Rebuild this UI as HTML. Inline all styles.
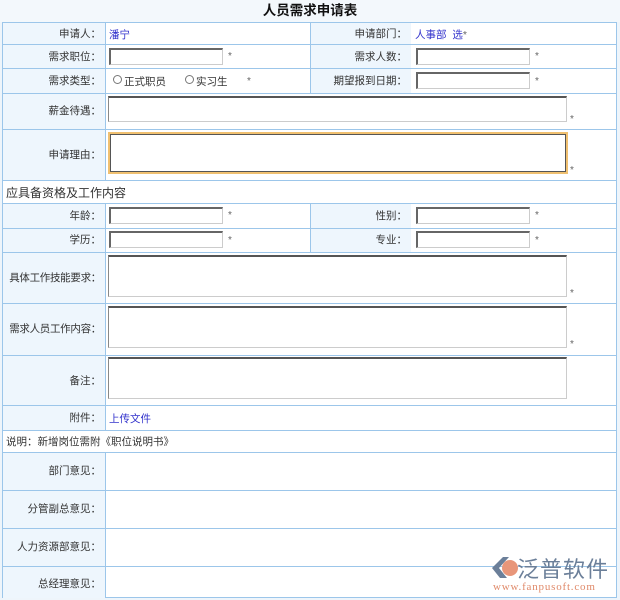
<!DOCTYPE html>
<html><head><meta charset="utf-8"><style>
*{margin:0;padding:0;box-sizing:border-box}
body{width:620px;height:600px;background:#eef5fb;font-family:"Liberation Sans","Noto Sans CJK SC",sans-serif;font-size:10.5px;color:#333;position:relative;overflow:hidden}
.a{position:absolute;white-space:nowrap}
.title{left:0;top:0;width:620px;height:22px;text-align:center;font-size:13.5px;font-weight:bold;color:#111;line-height:22px;background:#f3f8fc}
.tb{left:2px;top:22px;width:615px;height:576px;background:#fff;border:1px solid #9cc6ea}
.h{height:1px;background:#9cc6ea;left:2px;width:615px}
.v{width:1px;background:#9cc6ea}
.lb{background:#eef6fd}
.l{text-align:right;line-height:14px}
.val{color:#3333cc}
.in{background:#fff;border:1px solid #ccc;border-top:2px solid #666;border-left:2px solid #666}
.ta{background:#fff;border:1px solid #ccc;border-top:2px solid #555;border-left:1px solid #888}
.st{color:#666;font-size:10px}
.radio{width:9px;height:9px;border:1px solid #777;border-radius:50%;background:#fff}
</style></head><body>
<div class="a title">人员需求申请表</div>
<div class="a tb"></div>
<div class="a lb" style="left:3px;top:23px;width:102px;height:157px"></div>
<div class="a lb" style="left:311px;top:23px;width:100px;height:70px"></div>
<div class="a lb" style="left:3px;top:204px;width:102px;height:226px"></div>
<div class="a lb" style="left:311px;top:204px;width:100px;height:48px"></div>
<div class="a lb" style="left:3px;top:453px;width:102px;height:145px"></div>
<div class="a h" style="top:44px"></div>
<div class="a h" style="top:68px"></div>
<div class="a h" style="top:93px"></div>
<div class="a h" style="top:129px"></div>
<div class="a h" style="top:180px"></div>
<div class="a h" style="top:203px"></div>
<div class="a h" style="top:228px"></div>
<div class="a h" style="top:252px"></div>
<div class="a h" style="top:303px"></div>
<div class="a h" style="top:355px"></div>
<div class="a h" style="top:405px"></div>
<div class="a h" style="top:430px"></div>
<div class="a h" style="top:452px"></div>
<div class="a h" style="top:490px"></div>
<div class="a h" style="top:528px"></div>
<div class="a h" style="top:566px"></div>
<div class="a v" style="left:105px;top:22px;height:158px"></div>
<div class="a v" style="left:310px;top:22px;height:71px"></div>
<div class="a v" style="left:105px;top:203px;height:227px"></div>
<div class="a v" style="left:310px;top:203px;height:49px"></div>
<div class="a v" style="left:105px;top:452px;height:146px"></div>

<div class="a l" style="left:3px;width:98px;top:27px">申请人：</div>
<div class="a val" style="left:109px;top:27px">潘宁</div>
<div class="a l" style="left:311px;width:96px;top:27px">申请部门：</div>
<div class="a val" style="left:415px;top:27px">人事部&nbsp;&nbsp;选<span style="color:#666">*</span></div>

<div class="a l" style="left:3px;width:98px;top:50px">需求职位：</div>
<div class="a in" style="left:109px;top:48px;width:114px;height:17px"></div>
<div class="a st" style="left:228px;top:51px">*</div>
<div class="a l" style="left:311px;width:96px;top:50px">需求人数：</div>
<div class="a in" style="left:416px;top:48px;width:114px;height:17px"></div>
<div class="a st" style="left:535px;top:51px">*</div>

<div class="a l" style="left:3px;width:98px;top:74px">需求类型：</div>
<div class="a radio" style="left:113px;top:75px"></div>
<div class="a" style="left:124px;top:74px">正式职员</div>
<div class="a radio" style="left:185px;top:75px"></div>
<div class="a" style="left:196px;top:74px">实习生</div>
<div class="a st" style="left:247px;top:76px">*</div>
<div class="a l" style="left:311px;width:96px;top:74px">期望报到日期：</div>
<div class="a in" style="left:416px;top:72px;width:114px;height:17px"></div>
<div class="a st" style="left:535px;top:76px">*</div>

<div class="a l" style="left:3px;width:98px;top:104px">薪金待遇：</div>
<div class="a ta" style="left:108px;top:96px;width:459px;height:26px"></div>
<div class="a st" style="left:570px;top:114px">*</div>

<div class="a l" style="left:3px;width:98px;top:148px">申请理由：</div>
<div class="a" style="left:108px;top:132px;width:460px;height:42px;border:2px solid #f0c070;outline:1px solid #555;outline-offset:-3px;background:#fff"></div>
<div class="a st" style="left:570px;top:165px">*</div>

<div class="a" style="left:6px;top:184px;font-size:12px;color:#333">应具备资格及工作内容</div>

<div class="a l" style="left:3px;width:98px;top:209px">年龄：</div>
<div class="a in" style="left:109px;top:207px;width:114px;height:17px"></div>
<div class="a st" style="left:228px;top:210px">*</div>
<div class="a l" style="left:311px;width:96px;top:209px">性别：</div>
<div class="a in" style="left:416px;top:207px;width:114px;height:17px"></div>
<div class="a st" style="left:535px;top:210px">*</div>

<div class="a l" style="left:3px;width:98px;top:233px">学历：</div>
<div class="a in" style="left:109px;top:231px;width:114px;height:17px"></div>
<div class="a st" style="left:228px;top:235px">*</div>
<div class="a l" style="left:311px;width:96px;top:233px">专业：</div>
<div class="a in" style="left:416px;top:231px;width:114px;height:17px"></div>
<div class="a st" style="left:535px;top:235px">*</div>

<div class="a l" style="left:3px;width:98px;top:271px;letter-spacing:-0.3px">具体工作技能要求：</div>
<div class="a ta" style="left:108px;top:255px;width:459px;height:42px"></div>
<div class="a st" style="left:570px;top:288px">*</div>

<div class="a l" style="left:3px;width:98px;top:322px;letter-spacing:-0.3px">需求人员工作内容：</div>
<div class="a ta" style="left:108px;top:306px;width:459px;height:42px"></div>
<div class="a st" style="left:570px;top:339px">*</div>

<div class="a l" style="left:3px;width:98px;top:374px">备注：</div>
<div class="a ta" style="left:108px;top:357px;width:459px;height:42px"></div>

<div class="a l" style="left:3px;width:98px;top:411px">附件：</div>
<div class="a val" style="left:109px;top:411px">上传文件</div>

<div class="a" style="left:6px;top:434px">说明：新增岗位需附《职位说明书》</div>

<div class="a l" style="left:3px;width:98px;top:464px">部门意见：</div>
<div class="a l" style="left:3px;width:98px;top:502px">分管副总意见：</div>
<div class="a l" style="left:3px;width:98px;top:540px">人力资源部意见：</div>
<div class="a l" style="left:3px;width:98px;top:577px">总经理意见：</div>

<svg class="a" style="left:490px;top:555px" width="30" height="26" viewBox="0 0 30 26">
<path d="M2 13 L13 2 L19 2 L9 13 L17 23 L10 23 Z" fill="#6b7f99"/>
<circle cx="20" cy="13" r="8" fill="#e8967a"/>
</svg>
<div class="a" style="left:517px;top:552px;font-size:22px;color:#6b7f99;letter-spacing:1px">泛普软件</div>
<div class="a" style="left:493px;top:581px;font-size:11px;font-family:'Liberation Serif',serif;color:#e08a6a;letter-spacing:0.8px">www.fanpusoft.com</div>
</body></html>
